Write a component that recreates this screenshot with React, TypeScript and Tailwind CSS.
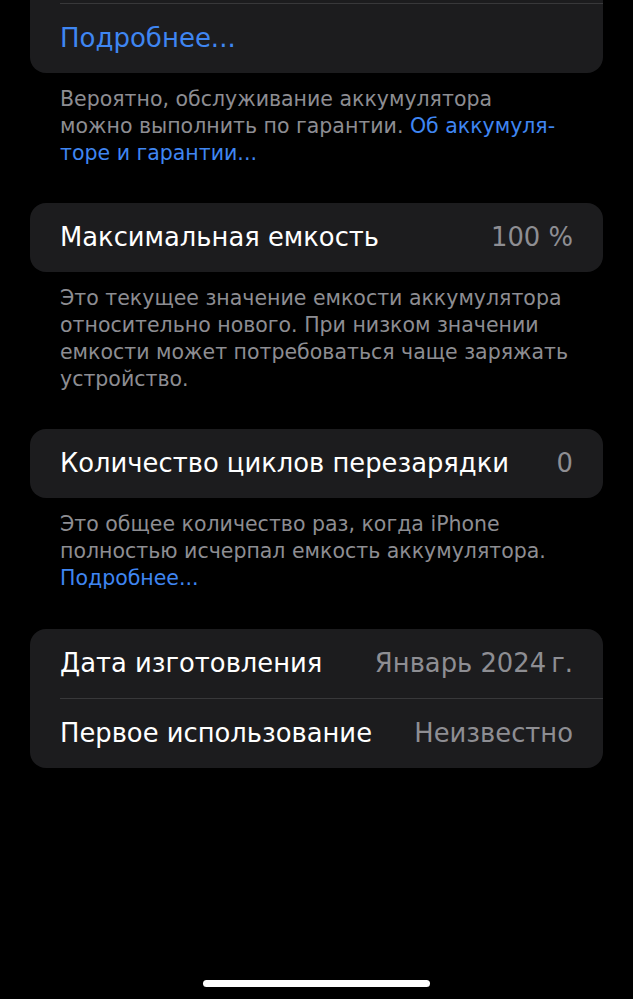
const font = { fontFamily: '"DejaVu Sans", "Noto Sans", sans-serif' };

function Row({ label, value, link }: { label: string; value?: string; link?: boolean }) {
  return (
    <div className="flex h-[69px] items-center justify-between px-[30px]">
      <span className={link ? 'text-[26px] text-[#3f86f2]' : 'text-[25.8px] text-white'}>{label}</span>
      {value && <span className="text-[25.8px] text-[#8e8e93]">{value}</span>}
    </div>
  );
}

function Footer({ children, last }: { children: React.ReactNode; last?: boolean }) {
  return (
    <p
      className={
        last
          ? 'px-[30px] pt-[13px] pb-[37px] text-[20.5px] leading-[27px] text-[#8d8d92]'
          : 'px-[30px] pt-[13px] pb-[36px] text-[20.5px] leading-[27px] text-[#8d8d92]'
      }
    >
      {children}
    </p>
  );
}

export default function App() {
  return (
    <div className="flex h-[999px] w-full flex-col overflow-hidden bg-black px-[30px]" style={font}>
      <div className="rounded-b-[16px] bg-[#1c1c1e] pt-[3px]">
        <div className="ml-[30px] h-px bg-[#38383a]" />
        <Row label="Подробнее..." link />
      </div>
      <Footer>
        Вероятно, обслуживание аккумулятора
        <br />
        можно выполнить по гарантии. <span className="text-[#3f86f2]">Об аккумуля-</span>
        <br />
        <span className="text-[#3f86f2]">торе и гарантии...</span>
      </Footer>

      <div className="rounded-[16px] bg-[#1c1c1e]">
        <Row label="Максимальная емкость" value="100 %" />
      </div>
      <Footer>
        Это текущее значение емкости аккумулятора относительно нового. При низком значении емкости может
        потребоваться чаще заряжать устройство.
      </Footer>

      <div className="rounded-[16px] bg-[#1c1c1e]">
        <Row label="Количество циклов перезарядки" value="0" />
      </div>
      <Footer last>
        Это общее количество раз, когда iPhone полностью исчерпал емкость аккумулятора.{' '}
        <span className="text-[#3f86f2]">Подробнее...</span>
      </Footer>

      <div className="rounded-[16px] bg-[#1c1c1e]">
        <Row label="Дата изготовления" value={'Январь 2024\u202Fг.'} />
        <div className="ml-[30px] h-px bg-[#38383a]" />
        <Row label="Первое использование" value="Неизвестно" />
      </div>

      <div className="mt-auto mb-[12px] h-[7px] w-[227px] self-center rounded-full bg-white" />
    </div>
  );
}
